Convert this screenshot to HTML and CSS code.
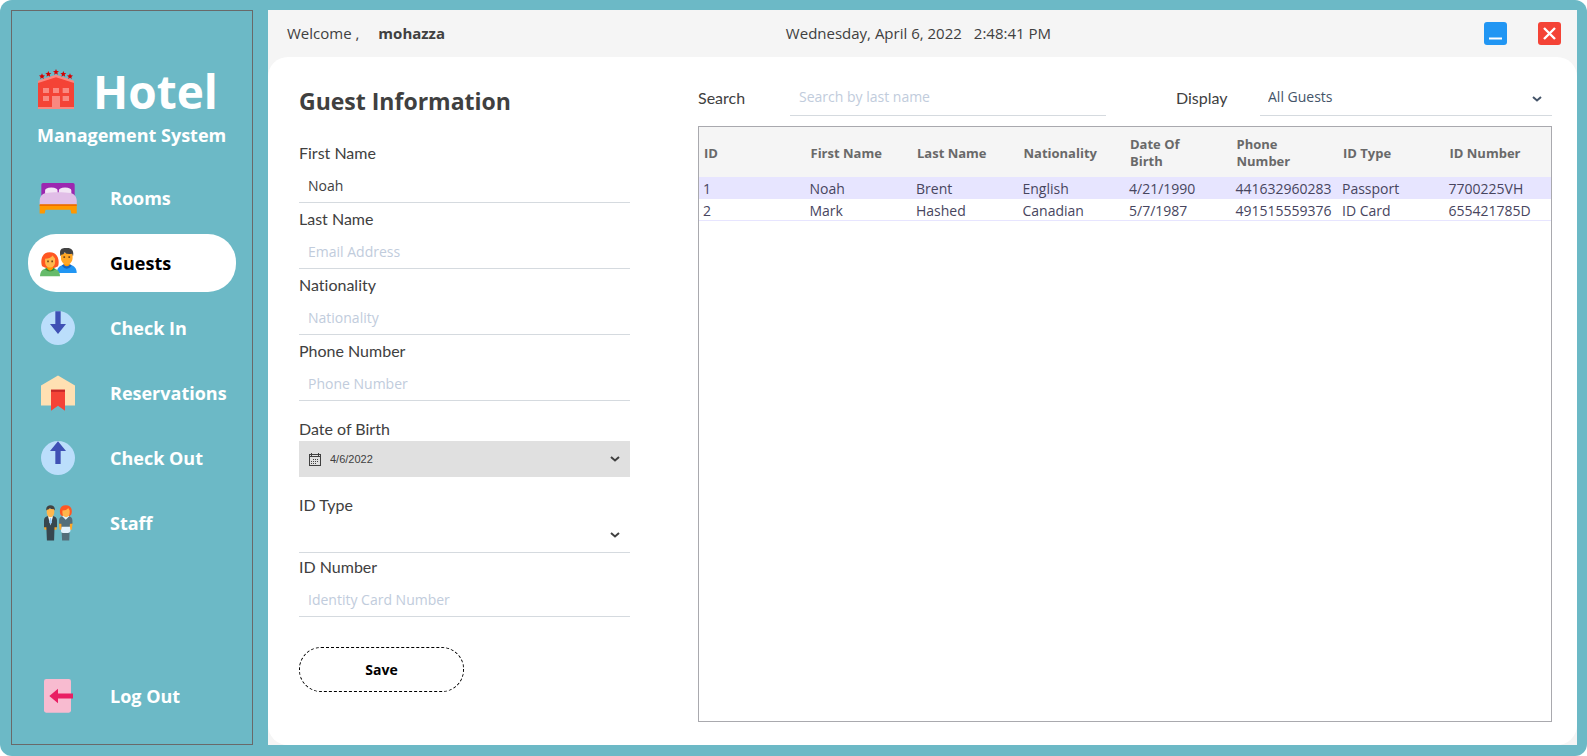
FILE: index.html
```html
<!DOCTYPE html>
<html lang="en">
<head>
<meta charset="utf-8">
<title>Hotel Management System</title>
<link rel="stylesheet" href="styles.css">
</head>
<body>
<div class="window">
  <aside class="sidebar">
    <div class="brand">
      <div class="brand-row">
        <svg class="brand-icon" viewBox="114 204 114 120" aria-hidden="true">
          <path fill="#f44336" d="M117 242l54-18 54 18v81H117z"/>
          <path fill="#fa8880" d="M117 239l54-18 54 18v7l-54-17-54 17zM117 318h108v6H117zM132 261h18v15h-18zM162 261h18v15h-18zM191 261h19v15h-19zM132 285h18v15h-18zM191 285h19v15h-19zM159 285h24v36h-24z"/>
          <g fill="#d50000">
            <path id="star" d="M171 204l2.600 6 6.400.5-5 4.300 1.600 6.200-5.600-3.400-5.600 3.400 1.600-6.200-5-4.300 6.400-.5z"/>
            <use href="#star" x="-23" y="6"/><use href="#star" x="22" y="6"/>
            <use href="#star" x="-42" y="13"/><use href="#star" x="42" y="13"/>
          </g>
        </svg>
        <h1 class="brand-name">Hotel</h1>
      </div>
      <p class="brand-sub">Management System</p>
    </div>
    <nav class="nav">
      <a class="nav-item" href="#rooms">
        <svg class="nav-icon" viewBox="0 0 48 48" aria-hidden="true">
          <path fill="#9c27b0" d="M4 22V8q0-2 2-2h36q2 0 2 2v14z"/>
          <path fill="#f3e5f5" d="M8.500 20v-5q0-3 7.500-3.500 7.500.5 7.500 3.500v5zM25 20v-5q0-3 7.500-3.500Q40 12 40 15v5z"/>
          <path fill="#e1bee7" d="M2 32v-4c0-6 3-9 7-10 8-1.300 22-1.300 30 0 5 1 7.500 5 7.500 10v4z"/>
          <path fill="#ff9800" d="M2 32h44.500v10.500H40l-1-4.500H9l-1 4.500H2z"/>
          <path fill="#ef6c00" d="M2 31.500h44.500v2H2z"/>
        </svg>
        <span>Rooms</span>
      </a>
      <a class="nav-item active" href="#guests" aria-current="page">
        <svg class="nav-icon" viewBox="0 0 48 48" aria-hidden="true">
          <path fill="#2196f3" d="M22.500 36c0-6 4-9 8-9.500h8c5 .5 7.900 4 7.900 9.500z"/>
          <path fill="#1565c0" d="M28.500 27q6 8 12 0l-2-1.500h-8z"/>
          <path fill="#ff9800" d="M31 22h7v4q-3.500 4-7 0z"/>
          <path fill="#ffa726" d="M27.500 12h14v6c0 4-3 8-7 8s-7-4-7-8z"/>
          <path fill="#424242" d="M27 16c-3-12 6-10 8-10 7 0 8 5 7 10l-1-3q-7 1-9-2-1 3-4 3z"/>
          <path fill="#784719" d="M30.500 16h2v2h-2zM36.500 16h2v2h-2z"/>
          <path fill="#ff5722" d="M5 28c-2-4-2-17 9-17s12 12 10 17q-5 3-9 2-5 1-10-2z"/>
          <path fill="#66bb6a" d="M2.400 40c0-6 3-9 8-9.500h8c5 .5 8 4 8 9.500z"/>
          <path fill="#388e3c" d="M8 31.300q6.500 6 13 0l-3-1.500h-7z"/>
          <path fill="#ff9800" d="M11 26h7v5q-3.500 4-7 0z"/>
          <path fill="#ffb74d" d="M8.500 19q6 0 9-4l3 4v4c0 4-3 6.500-6 6.500s-6-2.500-6-6.500z"/>
          <path fill="#784719" d="M11 21h2v2h-2zM16 21h2v2h-2z"/>
        </svg>
        <span>Guests</span>
      </a>
      <a class="nav-item" href="#check-in">
        <svg class="nav-icon" viewBox="0 0 48 48" aria-hidden="true">
          <circle cx="24" cy="24" r="20.400" fill="#bbdefb"/>
          <path fill="#3f51b5" d="M20.800 4h6.400v15.200h6.400L24 31.200l-9.600-12h6.400z"/>
        </svg>
        <span>Check In</span>
      </a>
      <a class="nav-item" href="#reservations">
        <svg class="nav-icon" viewBox="0 0 48 48" aria-hidden="true">
          <path fill="#ffe0b2" d="M24 3l20.400 12v24H3.600V15z"/>
          <path fill="#f44336" d="M15.600 20h16.800v25.200L24 39.200l-8.400 6z"/>
          <path fill="#c62828" d="M15.600 20h16.800v2.600H15.600z"/>
        </svg>
        <span>Reservations</span>
      </a>
      <a class="nav-item" href="#check-out">
        <svg class="nav-icon" viewBox="0 0 48 48" aria-hidden="true">
          <circle cx="24" cy="24" r="20.400" fill="#bbdefb"/>
          <path fill="#3f51b5" d="M24 4l9.600 11.600h-6.400v15.600h-6.400V15.600h-6.400z"/>
        </svg>
        <span>Check Out</span>
      </a>
      <a class="nav-item" href="#staff">
        <svg class="nav-icon" viewBox="0 0 48 48" aria-hidden="true">
          <path fill="#ffa726" d="M7 27h4v5H8zM19 27h4l-1 5h-3zM25 24h4v8h-3zM37 24h4.500l-1 8H37z"/>
          <path fill="#37474f" d="M7.200 29v-8c0-3 2-4.500 4-5h7.600c2 .5 4 2 4 5v8h-3l-.5 16h-8.600l-.7-16z"/>
          <path fill="#fff" d="M12 16h6l-3 11z"/>
          <path fill="#90caf9" d="M14.300 18h1.500l.8 5-1.500 3-1.500-3z"/>
          <path fill="#ffb74d" d="M10.500 7h9v4c0 3-2 6-4.500 6s-4.500-3-4.500-6z"/>
          <path fill="#424242" d="M10 9c-1-4 2-6.300 5-6.300S21 5 20.200 9l-1-1.500q-4 0-5-1.500-1 2-3.200 2z"/>
          <path fill="#ff5722" d="M27 14c-2-6 0-11.200 6.300-11.200S42 8 39.800 14q-3 3-6.500 2-3.300 1-6.300-2z"/>
          <path fill="#546e7a" d="M25.300 25v-4c0-3 2-4.500 4-5h8c2 .5 4 2 4 5v4h-3l-.8 20h-8.600l-.9-20z"/>
          <path fill="#e3f2fd" d="M29 16l4.300 4 4.300-4-1-1h-6.600zM28.400 28.500h10l.6 5q-1 2.500-3 2.500h-6q-2.500 0-2.500-2.500z"/>
          <path fill="#ffb74d" d="M29.300 9q5 0 7-3l1.700 3v3c0 3-2 5-4.300 5s-4.400-2-4.400-5z"/>
        </svg>
        <span>Staff</span>
      </a>
      <a class="nav-item logout" href="#logout">
        <svg class="nav-icon" viewBox="0 0 48 48" aria-hidden="true">
          <rect x="7.200" y="3.600" width="32.400" height="40.400" rx="2.600" fill="#f8bbd0"/>
          <path fill="#e91e63" d="M13.600 24L24 15.200V21h18v6H24v5.800z"/>
        </svg>
        <span>Log Out</span>
      </a>
    </nav>
  </aside>

  <main class="main">
    <header class="topbar">
      <p class="welcome"><span>Welcome ,</span><strong>mohazza</strong></p>
      <p class="clock"><span>Wednesday, April 6, 2022</span><span>2:48:41 PM</span></p>
      <div class="controls">
        <button class="control minimize" type="button" aria-label="Minimize">
          <svg viewBox="0 0 23 23" aria-hidden="true"><path d="M5 16.500h13" stroke="#fff" stroke-width="2"/></svg>
        </button>
        <button class="control close" type="button" aria-label="Close">
          <svg viewBox="0 0 23 23" aria-hidden="true"><path d="M6 6l11 11M17 6L6 17" stroke="#fff" stroke-width="2.400"/></svg>
        </button>
      </div>
    </header>

    <div class="content">
      <form class="guest-form">
        <h2 class="form-title">Guest Information</h2>
        <div class="field">
          <label for="first-name">First Name</label>
          <input class="text-input" id="first-name" type="text" value="Noah">
        </div>
        <div class="field">
          <label for="last-name">Last Name</label>
          <input class="text-input" id="last-name" type="text" placeholder="Email Address">
        </div>
        <div class="field">
          <label for="nationality">Nationality</label>
          <input class="text-input" id="nationality" type="text" placeholder="Nationality">
        </div>
        <div class="field">
          <label for="phone">Phone Number</label>
          <input class="text-input" id="phone" type="text" placeholder="Phone Number">
        </div>
        <div class="field field-date">
          <label for="birth">Date of Birth</label>
          <div class="date-box">
            <svg class="calendar" viewBox="0 0 12 13" shape-rendering="crispEdges" aria-hidden="true">
              <path fill="none" stroke="#404040" d="M.5 1.500h11v11H.5zM0 3.500h12M2.500 0v3M9.500 0v3"/>
              <path fill="#404040" d="M4 6h1v1H4zM6 6h1v1H6zM8 6h1v1H8zM2 8h1v1H2zM4 8h1v1H4zM6 8h1v1H6zM8 8h1v1H8zM2 10h1v1H2zM4 10h1v1H4zM6 10h1v1H6z"/>
            </svg>
            <input class="date-input" id="birth" type="text" value="4/6/2022">
            <svg class="chevron" viewBox="0 0 10 6" aria-hidden="true"><path d="M1 1l4 3.500L9 1"/></svg>
          </div>
        </div>
        <div class="field field-type">
          <label for="id-type">ID Type</label>
          <div class="select-box">
            <select class="select" id="id-type"><option selected></option><option>Passport</option><option>ID Card</option></select>
            <svg class="chevron" viewBox="0 0 10 6" aria-hidden="true"><path d="M1 1l4 3.500L9 1"/></svg>
          </div>
        </div>
        <div class="field field-number">
          <label for="id-number">ID Number</label>
          <input class="text-input" id="id-number" type="text" placeholder="Identity Card Number">
        </div>
        <button class="save" type="button">Save</button>
      </form>

      <section class="guests">
        <div class="filters">
          <label for="search">Search</label>
          <input class="text-input search" id="search" type="text" placeholder="Search by last name">
          <label class="display-label" for="display">Display</label>
          <div class="select-box display-box">
            <select class="select" id="display"><option>All Guests</option></select>
            <svg class="chevron" viewBox="0 0 10 6" aria-hidden="true"><path d="M1 1l4 3.500L9 1"/></svg>
          </div>
        </div>
        <div class="table-panel">
          <table class="table">
            <thead>
              <tr><th>ID</th><th>First Name</th><th>Last Name</th><th>Nationality</th><th>Date Of<br>Birth</th><th>Phone<br>Number</th><th>ID Type</th><th>ID Number</th></tr>
            </thead>
            <tbody>
              <tr class="selected"><td>1</td><td>Noah</td><td>Brent</td><td>English</td><td>4/21/1990</td><td>441632960283</td><td>Passport</td><td>7700225VH</td></tr>
              <tr><td>2</td><td>Mark</td><td>Hashed</td><td>Canadian</td><td>5/7/1987</td><td>491515559376</td><td>ID Card</td><td>655421785D</td></tr>
            </tbody>
          </table>
        </div>
      </section>
    </div>
  </main>
</div>
</body>
</html>
```

FILE: styles.css
```css
* {
  box-sizing: border-box;
}

body {
  margin: 0;
  background: #fff;
  color: #404040;
  font-family: "Open Sans", "Noto Sans", sans-serif;
  font-size: 14px;
}

h1, h2, p {
  margin: 0;
}

input, select, button {
  font: inherit;
  color: inherit;
}

.window {
  display: flex;
  gap: 15px;
  min-height: 100vh;
  padding: 10px 10px 11px 11px;
  border-radius: 12px;
  background: #6cb9c6;
}

/* Sidebar */
.sidebar {
  display: flex;
  flex-direction: column;
  flex: 0 0 242px;
  padding: 50px 16px 19px;
  border: 1px solid #696969;
  color: #fff;
}

.brand {
  padding-left: 9px;
}

.brand-row {
  display: flex;
  align-items: center;
  gap: 18px;
  height: 56px;
}

.brand-icon {
  width: 38px;
  height: 40px;
}

.brand-name {
  padding-top: 4px;
  font-size: 46px;
  line-height: 56px;
}

.brand-sub {
  font-size: 18px;
  font-weight: 700;
  line-height: 36px;
  white-space: nowrap;
}

.nav {
  display: flex;
  flex: 1;
  flex-direction: column;
  gap: 7px;
  padding-top: 16px;
}

.nav-item {
  display: flex;
  align-items: center;
  gap: 32px;
  height: 58px;
  padding-left: 10px;
  border-radius: 28px;
  color: #fff;
  font-size: 18px;
  font-weight: 700;
  text-decoration: none;
}

.nav-item.active {
  background: #fff;
  color: #000;
}

.nav-item.logout {
  margin-top: auto;
}

.nav-icon {
  flex: none;
  width: 40px;
  height: 40px;
}

/* Main area */
.main {
  display: flex;
  flex: 1;
  flex-direction: column;
  min-width: 0;
  background: #f5f5f5;
}

.topbar {
  display: grid;
  grid-template-columns: 39% 1fr auto;
  column-gap: 2px;
  align-items: center;
  height: 47px;
  padding: 0 16px 0 19px;
  font-size: 15px;
}

.welcome, .clock {
  display: flex;
  padding-bottom: 2px;
}

.welcome {
  gap: 19px;
}

.clock {
  gap: 12px;
}

.controls {
  display: flex;
  gap: 31px;
}

.control {
  width: 23px;
  height: 23px;
  padding: 0;
  border: 0;
  border-radius: 3px;
}

.control svg {
  display: block;
}

.minimize {
  background: #2196f3;
}

.close {
  background: #f44336;
}

.content {
  display: flex;
  flex: 1;
  gap: 68px;
  padding: 20px 25px 23px 31px;
  border-radius: 20px;
  background: #fff;
}

/* Guest form */
.guest-form {
  display: flex;
  flex: 0 0 331px;
  flex-direction: column;
  gap: 5px;
}

.form-title {
  margin-bottom: 12px;
  font-size: 23px;
  line-height: 48px;
}

.field {
  display: flex;
  flex-direction: column;
}

.field label, .filters label {
  font-family: Lato, sans-serif;
  font-size: 16px;
  font-variant-ligatures: none;
  line-height: 22px;
}

.text-input {
  width: 100%;
  height: 39px;
  padding: 5px 9px 0;
  border: 0;
  border-bottom: 1px solid #d5dadf;
  outline: 0;
  background: none;
}

.text-input::placeholder {
  color: #c1ccdc;
  opacity: 1;
}

.field-date {
  gap: 1px;
  margin-top: 12px;
}

.date-box {
  display: flex;
  align-items: center;
  gap: 9px;
  height: 36px;
  padding: 0 10px;
  background: #e0e0e0;
}

.calendar {
  flex: none;
  width: 12px;
  height: 13px;
}

.date-input {
  flex: 1;
  min-width: 0;
  padding: 0;
  border: 0;
  background: none;
  font-family: "Liberation Sans", sans-serif;
  font-size: 11px;
}

.chevron {
  flex: none;
  width: 10px;
  height: 6px;
  fill: none;
  stroke: currentColor;
  stroke-width: 2;
}

.select-box {
  position: relative;
  height: 37px;
}

.select-box .chevron {
  position: absolute;
  top: 16px;
  right: 10px;
  pointer-events: none;
}

.select {
  width: 100%;
  height: 100%;
  padding: 0 8px;
  border: 0;
  border-bottom: 1px solid #d5dadf;
  border-radius: 0;
  appearance: none;
  background: none;
}

.field-type {
  margin-top: 12px;
}

.field-number {
  margin-top: -2px;
}

.save {
  width: 165px;
  height: 45px;
  margin-top: 25px;
  border: 1px dashed #000;
  border-radius: 22px;
  background: #fff;
  color: #000;
  font-weight: 700;
}

/* Guest list */
.guests {
  display: flex;
  flex: 1;
  flex-direction: column;
  gap: 10px;
  min-width: 0;
}

.filters {
  display: grid;
  grid-template-columns: 92px 316fr 154px 292fr;
  align-items: center;
  height: 39px;
}

.filters label {
  padding-top: 3px;
}

.filters .search {
  min-width: 0;
  padding-top: 0;
}

.display-label {
  padding-left: 70px;
}

.display-box {
  height: 39px;
  color: #445469;
}

.display-box .chevron {
  top: 19px;
}

.table-panel {
  flex: 1;
  border: 1px solid #a9a9ae;
}

.table {
  width: 100%;
  border-spacing: 0;
  table-layout: fixed;
}

.table th {
  height: 50px;
  padding: 2px 5px 0;
  background: #f5f5f5;
  color: #696969;
  font-size: 13px;
  line-height: 17px;
  text-align: left;
}

.table td {
  height: 22px;
  padding: 3px 4px 0;
  border-bottom: 1px solid #e7e5ff;
  color: #47455e;
  line-height: 18px;
  white-space: nowrap;
}

.table .selected {
  background: #e7e5ff;
}
```
